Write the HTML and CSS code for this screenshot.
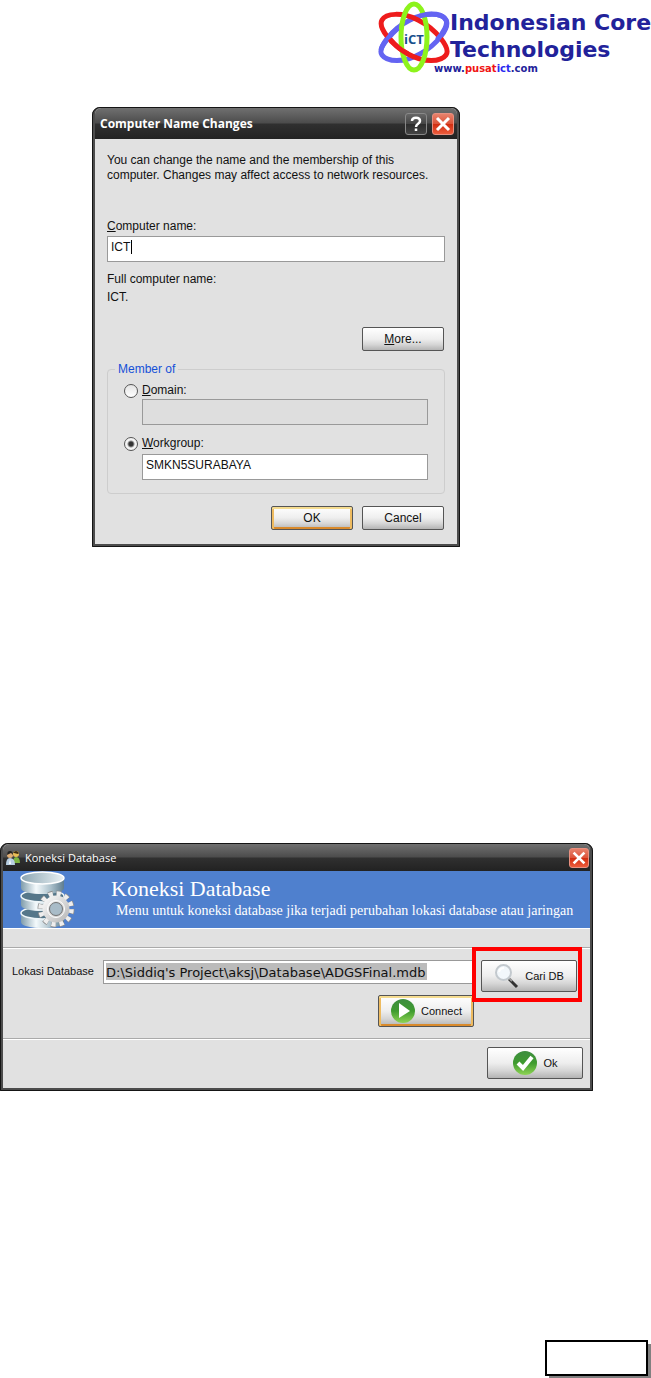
FILE: index.html
```html
<!DOCTYPE html>
<html lang="id">
<head>
<meta charset="utf-8">
<meta name="viewport" content="width=device-width, initial-scale=1">
<title>Indonesian Core Technologies</title>
<link rel="stylesheet" href="styles.css">
</head>
<body>
<div class="page">
  <header class="brand">
    <svg class="brand-mark" viewBox="0 0 72 74" aria-hidden="true">
      <g fill="none" stroke-width="5">
        <path id="orbit" d="M4 54C-1 47 14 28 32 19C48 11 64 12 68 19C72 26 60 43 42 53C26 62 9 61 4 54Z" stroke="#6464f2"/>
        <path d="M68 54C73 47 58 28 40 19C24 11 8 12 4 19C0 26 12 43 30 53C46 62 63 61 68 54Z" stroke="#ee1c1c"/>
        <ellipse cx="36" cy="36" rx="13" ry="33" stroke="#8df31c"/>
        <path d="M42 15C54 11 65 13 68 19C70 23 66 31 59 39M20 27C12 34 4 44 3 49" stroke="#6464f2"/>
        <path d="M12 38C17 44 22 49 30 53" stroke="#ee1c1c"/>
      </g>
      <text class="brand-monogram" x="36" y="43" text-anchor="middle">iCT</text>
    </svg>
    <div class="brand-text">
      <div class="brand-name">Indonesian Core<br>Technologies</div>
      <div class="brand-url">www.<span class="red">pusat</span><span class="blue">ict</span>.com</div>
    </div>
  </header>

  <main>
    <form class="window name-window">
      <div class="titlebar">
        <h1 class="title">Computer Name Changes</h1>
        <button type="button" class="cap help" aria-label="Help"><svg viewBox="0 0 20 20"><path d="M6 7C6 2.500 14 2.500 14 7C14 10 10 9.500 10 13M10 14.500V17" fill="none" stroke="#fff" stroke-width="2.500"/></svg></button>
        <button type="button" class="cap close" aria-label="Close"><svg viewBox="0 0 20 20"><path d="M4 4L16 16M16 4L4 16" stroke="#fff" stroke-width="3"/></svg></button>
      </div>
      <div class="name-body">
        <p class="intro">You can change the name and the membership of this computer. Changes may affect access to network resources.</p>
        <label class="line" for="cname"><u>C</u>omputer name:</label>
        <div class="caret-field">
          <input class="field" id="cname" type="text" value="ICT">
          <span class="caret"></span>
        </div>
        <div class="full-name">
          <div class="line">Full computer name:</div>
          <div class="line">ICT.</div>
        </div>
        <div class="actions more"><button type="button" class="btn"><u>M</u>ore...</button></div>
        <fieldset class="group">
          <legend>Member of</legend>
          <div class="choice">
            <input type="radio" name="member" id="domain">
            <label for="domain"><u>D</u>omain:</label>
            <input class="field" type="text" aria-label="Domain name" disabled>
          </div>
          <div class="choice">
            <input type="radio" name="member" id="workgroup" checked>
            <label for="workgroup"><u>W</u>orkgroup:</label>
            <input class="field" type="text" aria-label="Workgroup name" value="SMKN5SURABAYA">
          </div>
        </fieldset>
        <div class="actions">
          <button type="button" class="btn default">OK</button>
          <button type="button" class="btn">Cancel</button>
        </div>
      </div>
    </form>

    <form class="window db-window">
      <div class="titlebar small">
        <svg class="app-icon" viewBox="0 0 16 16" aria-hidden="true">
          <path d="M8 13Q8 7 11 7Q15 7 15 13Z" fill="#7cb342"/>
          <circle cx="11" cy="4" r="3" fill="#e8bd55"/><path d="M8 3Q11-1 14 3L13 4L9 3Z" fill="#3b2a14"/>
          <path d="M1 15Q1 8 5 8Q10 8 10 15Z" fill="#b8cfe2"/>
          <circle cx="5" cy="5" r="3" fill="#dfae75"/><path d="M2 5Q2 1 5 1Q8 1 8 5L6 3Z" fill="#222"/>
          <path d="M5 9L6 14H4Z" fill="#fff"/>
        </svg>
        <h2 class="title">Koneksi Database</h2>
        <button type="button" class="cap close" aria-label="Tutup"><svg viewBox="0 0 20 20"><path d="M4 4L16 16M16 4L4 16" stroke="#fff" stroke-width="3"/></svg></button>
      </div>
      <div class="banner">
        <svg class="db-icon" viewBox="0 0 56 57" aria-hidden="true">
          <defs>
            <linearGradient id="steel"><stop offset="0" stop-color="#7f9cab"/><stop offset=".35" stop-color="#f4fafc"/><stop offset=".7" stop-color="#a9bfca"/><stop offset="1" stop-color="#5f7d8f"/></linearGradient>
            <linearGradient id="lid"><stop offset="0" stop-color="#8ba5b2"/><stop offset="1" stop-color="#e9f1f4"/></linearGradient>
            <linearGradient id="cog" x2="1" y2="1"><stop offset="0" stop-color="#f5f5f5"/><stop offset="1" stop-color="#bdbdbd"/></linearGradient>
          </defs>
          <path d="M1 42V51C1 59 44 59 44 51V42Z" fill="url(#steel)"/>
          <ellipse cx="22.500" cy="42" rx="21.500" ry="6" fill="#55778a" stroke="#eef6f9" stroke-width="1.500"/>
          <path d="M1 25V34C1 42 44 42 44 34V25Z" fill="url(#steel)"/>
          <ellipse cx="22.500" cy="25" rx="21.500" ry="6" fill="#55778a" stroke="#eef6f9" stroke-width="1.500"/>
          <path d="M1 7V17C1 25 44 25 44 17V7Z" fill="url(#steel)"/>
          <ellipse cx="22.500" cy="7" rx="21.500" ry="6" fill="url(#lid)" stroke="#fff" stroke-width="1.500"/>
          <g transform="translate(36 38)">
            <circle r="15.500" fill="none" stroke="#8d8d8d" stroke-width="6" stroke-dasharray="4.600 3.516"/>
            <circle r="15" fill="none" stroke="#eee" stroke-width="5.500" stroke-dasharray="4 3.854" stroke-dashoffset="-.2"/>
            <circle r="10" fill="none" stroke="url(#cog)" stroke-width="7"/>
            <circle r="6.500" fill="#a9bcc8" stroke="#777"/>
            <circle r="8.500" fill="none" stroke="#fff"/>
          </g>
        </svg>
        <div class="banner-text">
          <div class="banner-title">Koneksi Database</div>
          <div class="banner-sub">Menu untuk koneksi database jika terjadi perubahan lokasi database atau jaringan</div>
        </div>
      </div>
      <div class="strip"></div>
      <div class="db-body">
        <label for="loc">Lokasi Database</label>
        <input class="field path" id="loc" type="text" value="D:\Siddiq's Project\aksj\Database\ADGSFinal.mdb">
        <div class="marked">
          <button type="button" class="btn large">
            <svg viewBox="0 0 26 26" aria-hidden="true"><path d="M15 16L23 24" stroke="#333" stroke-width="3"/><path d="M15 15L18 18" stroke="#999" stroke-width="2"/><circle cx="9.500" cy="9.500" r="7.500" fill="#f2f7fb" stroke="#c3c9ce" stroke-width="2"/><path d="M5 9Q6 5 10 5" stroke="#fff" stroke-width="2" fill="none"/></svg>
            Cari DB
          </button>
        </div>
        <button type="button" class="btn large default connect">
          <svg viewBox="0 0 26 26" aria-hidden="true">
            <defs><linearGradient id="green" x2="0" y2="1"><stop offset="0" stop-color="#3d8d3f"/><stop offset=".5" stop-color="#3f9b2f"/><stop offset="1" stop-color="#8ed454"/></linearGradient></defs>
            <circle cx="13" cy="13" r="12" fill="url(#green)"/><path d="M9 5L20 13L9 20Z" fill="#fff"/></svg>
          Connect
        </button>
      </div>
      <div class="db-foot">
        <button type="button" class="btn large">
          <svg viewBox="0 0 26 26" aria-hidden="true"><circle cx="13" cy="13" r="12" fill="url(#green)"/><path d="M6 13L11 18L20 7" fill="none" stroke="#fff" stroke-width="4"/></svg>
          Ok
        </button>
      </div>
    </form>
  </main>

  <footer class="page-foot"><div class="page-box"></div></footer>
</div>
</body>
</html>
```
FILE: styles.css
```css
* { box-sizing: border-box; }
body { margin: 0; background: #fff; color: #111; font: 12px/15px "Liberation Sans", Arial, sans-serif; }
h1, h2, p { margin: 0; }
button, input { font: inherit; color: inherit; }
.page { min-height: 100vh; display: flex; flex-direction: column; }
main { flex: 1; }

.brand { display: flex; justify-content: flex-end; height: 107px; }
.brand-mark { width: 72px; height: 74px; margin-top: 1px; flex: none; }
.brand-monogram { font: bold 13px "Open Sans", sans-serif; fill: #17508c; }
.brand-text { padding-top: 9px; width: 201px; white-space: nowrap; }
.brand-name { font: bold 22px/27px "DejaVu Sans", sans-serif; color: #22229a; }
.brand-url { font: bold 10px/12px "DejaVu Sans", sans-serif; color: #22229a; margin-left: -16px; }
.red { color: #f01414; }
.blue { color: #2a2af0; }

.window { background: #e1e1e1; border: 3px solid #4c4c4c; border-top-width: 1px; border-radius: 8px 8px 0 0; outline: 1px solid #151515; outline-offset: -1px; }
.titlebar { display: flex; align-items: center; gap: 5px; height: 31px; padding: 0 3px 0 5px; color: #fff; border-radius: 6px 6px 0 0; background: linear-gradient(#707070, #4c4c4c 48%, #303030 52%, #222); }
.title { flex: 1; font: bold 12px/16px "Open Sans", sans-serif; }
.cap { width: 22px; height: 22px; padding: 0; border: 1px solid #888; border-radius: 3px; background: linear-gradient(#666, #444 50%, #2c2c2c 50%, #444); }
.cap svg { display: block; width: 20px; height: 20px; }
.close { border-color: #e89080; background: linear-gradient(#e8826c, #dc5238 50%, #d02c10 50%, #ec5c3c); }

.name-window { max-width: 368px; margin-left: 92px; }
.name-body { padding: 14px 12px 14px; }
.intro { height: 64px; }
.line { display: block; line-height: 18px; }
.field { display: block; width: 100%; height: 26px; padding: 0 3px 4px; border: 1px solid #999; border-radius: 0; background: #fff; outline: 0; }
.field:disabled { background: #dedede; }
.caret-field { position: relative; margin-top: 1px; }
.caret { position: absolute; left: 24px; top: 4px; width: 1px; height: 14px; background: #000; }
.full-name { padding-top: 8px; }
.actions { display: flex; justify-content: flex-end; gap: 9px; padding-right: 1px; }
.more { padding-top: 21px; }
.btn { width: 82px; height: 24px; padding: 0; border: 1px solid #555; border-radius: 2px; background: linear-gradient(#fff, #eee 50%, #d6d6d6 75%, #b4b4b4); }
.default { box-shadow: inset 0 2px #f5dc90, inset 2px 0 #eebb60, inset -2px 0 #eebb60, inset 0 -2px #d98a2c; }
.group { margin: 11px 0 12px; padding: 0 16px 13px; border: 1px solid #cdcdcd; border-radius: 4px; min-width: 0; }
legend { margin-left: -9px; padding: 0 3px; color: #1450d8; }
.choice { display: grid; grid-template-columns: 18px 1fr; align-items: center; row-gap: 1px; padding-top: 6px; }
.choice + .choice { padding-top: 11px; row-gap: 3px; }
.choice .field { grid-column: 2; }
.choice [type="radio"] { appearance: none; width: 14px; height: 14px; margin: 0; border: 1px solid #555; border-radius: 50%; background: linear-gradient(#e4e4e4, #fff); }
.choice [type="radio"]:checked { background: radial-gradient(circle, #333 2px, #f4f4f4 4px); }

.db-window { max-width: 593px; margin-top: 296px; font-size: 11px; }
.small { height: 27px; padding: 0 1px 0 2px; gap: 4px; }
.small .title { font-weight: normal; font-size: 11px; }
.small .cap { width: 20px; height: 20px; }
.small .cap svg { width: 18px; height: 18px; }
.app-icon { width: 16px; height: 16px; }
.banner { display: flex; height: 57px; padding-left: 17px; gap: 35px; background: #4f80ce; color: #fff; font-family: "Liberation Serif", serif; }
.db-icon { width: 56px; height: 57px; flex: none; }
.banner-text { padding-top: 5px; white-space: nowrap; }
.banner-title { font-size: 22px; line-height: 26px; }
.banner-sub { font-size: 14px; line-height: 18px; padding-left: 5px; }
.strip { height: 21px; border-top: 1px solid #fff; border-bottom: 1px solid #fff; box-shadow: inset 0 -1px #aaa; }
.db-body { display: grid; grid-template-columns: 91px 1fr 96px; row-gap: 3px; padding: 11px 13px 11px 9px; border-bottom: 1px solid #aaa; }
.db-body label { padding-top: 4px; }
.path { width: auto; height: 24px; margin-right: 6px; padding: 1px 2px; font: 13px "DejaVu Sans", sans-serif; background: linear-gradient(#bbb, #bbb) 2px 2px / 321px 17px no-repeat #fff; }
.marked { position: relative; }
.marked::after { content: ""; position: absolute; inset: -13px -5px -10px -9px; border: 4px solid #f00; pointer-events: none; }
.large { display: flex; align-items: center; justify-content: center; gap: 5px; width: 96px; height: 32px; }
.large svg { width: 26px; height: 26px; flex: none; }
.connect { grid-column: 2; justify-self: end; margin-right: 7px; }
.db-foot { display: flex; justify-content: flex-end; padding: 7px 7px 9px; border-top: 1px solid #fff; }

.page-foot { display: flex; justify-content: flex-end; padding: 0 3px 2px; }
.page-box { width: 103px; height: 36px; border: 2px solid #000; background: #fff; box-shadow: 4px 4px #808080; }
```
